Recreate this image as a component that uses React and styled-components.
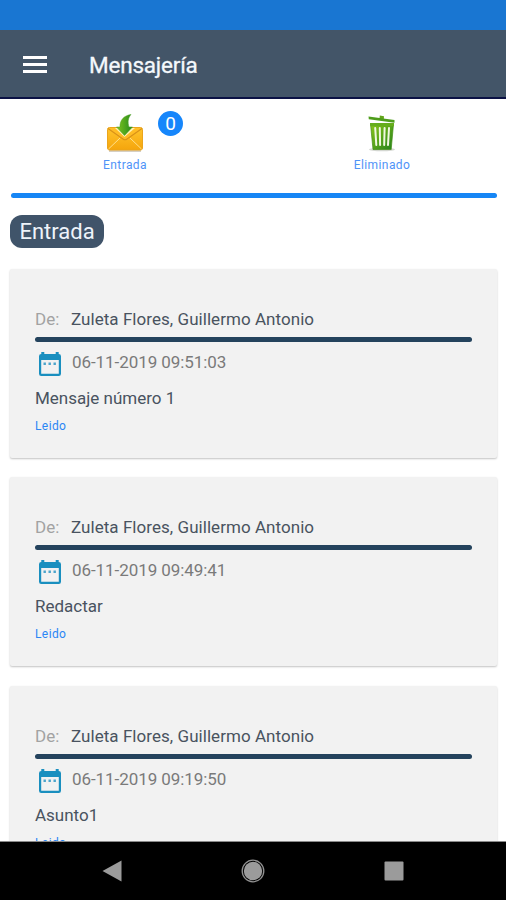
import styled, { createGlobalStyle } from "styled-components";

const GlobalStyle = createGlobalStyle`
  * {
    box-sizing: border-box;
  }
  body {
    margin: 0;
    background: #ffffff;
    font-family: Roboto, "Liberation Sans", sans-serif;
  }
`;

const Screen = styled.div`
  display: flex;
  flex-direction: column;
  height: 900px;
  overflow: hidden;
`;

const StatusBar = styled.div`
  flex: none;
  height: 30px;
  background: #1976d2;
`;

const Header = styled.header`
  flex: none;
  display: flex;
  align-items: center;
  height: 69px;
  padding: 2px 0 0 23px;
  background: #435568;
  border-bottom: 2px solid #0b1245;
`;

const MenuButton = styled.div`
  display: flex;
  flex-direction: column;
  gap: 4px;
  width: 24px;
  margin-right: 42px;
`;

const MenuLine = styled.span`
  height: 3px;
  background: #ffffff;
`;

const Title = styled.h1`
  margin: 0;
  color: #f4f8fc;
  font-size: 22.5px;
  font-weight: 400;
  line-height: 30px;
  letter-spacing: -0.2px;
  -webkit-text-stroke: 0.3px #f4f8fc;
`;

const Content = styled.main`
  flex: 1;
  min-height: 0;
  overflow: hidden;
  padding: 0 9px 0 10px;
`;

const Tabs = styled.nav`
  display: flex;
  height: 94px;
  padding: 14px 0 0 1px;
`;

const Tab = styled.div`
  position: relative;
  display: flex;
  flex-direction: column;
  align-items: center;
  flex: ${(props) => props.$flex};
  padding-left: ${(props) => props.$inset || "0"};
`;

const TabLabel = styled.span`
  margin-top: 4px;
  color: #4f93f8;
  font-size: 12px;
  line-height: 16px;
  letter-spacing: 0.4px;
`;

const Badge = styled.span`
  position: absolute;
  top: -2px;
  left: 147px;
  width: 25px;
  height: 25px;
  border-radius: 50%;
  background: #1686fb;
  color: #ffffff;
  font-size: 19px;
  line-height: 26px;
  text-align: center;
`;

const Divider = styled.div`
  height: ${(props) => props.$height};
  margin: ${(props) => props.$margin || "0"};
  border-radius: 3px;
  background: ${(props) => props.$color};
`;

const SectionPill = styled.h2`
  width: 94px;
  height: 33px;
  margin: 17px 0 20.6px;
  border-radius: 12px;
  background: #40546a;
  color: #eef3fa;
  font-size: 22px;
  font-weight: 400;
  line-height: 33px;
  text-align: center;
`;

const Card = styled.article`
  height: 189px;
  margin-bottom: 19.8px;
  padding: 38px 25px 0;
  border-radius: 2px;
  background: #f2f2f2;
  box-shadow: 0 1px 2px rgba(0, 0, 0, 0.24);
`;

const Row = styled.div`
  display: flex;
  height: ${(props) => props.$height};
`;

const Text = styled.span`
  color: ${(props) => props.$color};
  font-size: 17px;
  line-height: 24px;
`;

const FromLabel = styled(Text)`
  width: 36px;
`;

const Sender = styled(Text)`
  letter-spacing: 0.05px;
`;

const CalendarBox = styled.div`
  width: 37px;
  padding: 9px 0 0 1px;
`;

const DateText = styled(Text)`
  margin-top: 8px;
  letter-spacing: -0.07px;
`;

const Status = styled.div`
  color: #2b86f5;
  font-size: 12px;
  line-height: 16px;
  letter-spacing: 0.4px;
`;

const NavBar = styled.footer`
  flex: none;
  display: flex;
  justify-content: space-between;
  align-items: center;
  height: 59px;
  padding: 0 102px;
  border-top: 1px solid #8a8a8a;
  background: #000000;
`;

const InboxIcon = () => (
  <svg width="38" height="40" viewBox="0 0 38 40">
    <defs>
      <linearGradient id="envelope" x1="0" y1="0" x2="0" y2="1">
        <stop offset="0" stopColor="#ffc52d" />
        <stop offset="1" stopColor="#f5a50c" />
      </linearGradient>
      <linearGradient id="arrow" x1="0" y1="0" x2="1" y2="0">
        <stop offset="0" stopColor="#7fc51e" />
        <stop offset="1" stopColor="#258a1c" />
      </linearGradient>
    </defs>
    <path d="M3 38h32" stroke="#d5cfc4" strokeWidth="2" />
    <rect x="1.5" y="14.5" width="35" height="22.5" rx="2" fill="url(#envelope)" stroke="#eba51c" />
    <path d="M2.5 36L14 25M35.5 36L24 25" stroke="#ffe08b" strokeWidth="1" />
    <path d="M2 15.5L17 26Q19 27.5 21 26L36 15.5" fill="#ffbc24" stroke="#d99118" strokeWidth="1.1" />
    <path d="M9 15L18.5 24L29 15" fill="#fff0b3" />
    <path
      d="M25 1.5C18 2.5 13.7 7 14 14H10.5L18.5 22.5L26.5 14H23C21.5 9 22 5 25 1.5Z"
      fill="url(#arrow)"
      stroke="#4b9c20"
      strokeWidth="0.5"
    />
  </svg>
);

const TrashIcon = () => (
  <svg width="30" height="40" viewBox="0 0 30 40">
    <defs>
      <linearGradient id="bin" x1="0" y1="0" x2="1" y2="1">
        <stop offset="0" stopColor="#8bc619" />
        <stop offset="1" stopColor="#24821b" />
      </linearGradient>
    </defs>
    <ellipse cx="15" cy="36.5" rx="13" ry="1.8" fill="#d4d7d1" />
    <path d="M3.5 11H26.5L24.2 36.5H6Z" fill="url(#bin)" stroke="#438e16" strokeWidth="0.7" />
    <path
      d="M8.2 15L9.3 32M12.8 15L13.1 32M17.6 15L17.2 32M22 15L21 32"
      stroke="#f0f8df"
      strokeWidth="2"
      strokeLinecap="round"
    />
    <path d="M3 10H27V13.2H3.3Z" fill="#65ad1b" />
    <path d="M12.5 6L12.8 2.5L17 3.2L16.8 7" fill="#63a51b" />
    <path d="M1.5 3.4L27.5 7V9.8L1.8 6.2Z" fill="#4e9d1b" />
  </svg>
);

const CalendarIcon = () => (
  <svg width="28" height="28" viewBox="0 0 28 28">
    <path
      d="M5.3 1H8.3V3H19.7V1H22.7V3Q25 3 25 5.3V22.8Q25 25 22.8 25H5.2Q3 25 3 22.8V5.3Q3 3 5.3 3ZM5.2 9V22.8H22.8V9Z"
      fill="#1a8fbf"
      fillRule="evenodd"
    />
    <path d="M7.5 11.5h2.4v2.4H7.5zM12.5 11.5h2.4v2.4h-2.4zM17.5 11.5h2.4v2.4h-2.4z" fill="#4ba4cb" />
  </svg>
);

const messages = [
  { date: "06-11-2019 09:51:03", subject: "Mensaje número 1" },
  { date: "06-11-2019 09:49:41", subject: "Redactar" },
  { date: "06-11-2019 09:19:50", subject: "Asunto1" },
];

const Message = ({ date, subject }) => (
  <Card>
    <Row $height="30px">
      <FromLabel $color="#a2a2a2">De:</FromLabel>
      <Sender $color="#495360">Zuleta Flores, Guillermo Antonio</Sender>
    </Row>
    <Divider $height="5px" $color="#24435d" />
    <Row $height="44px">
      <CalendarBox>
        <CalendarIcon />
      </CalendarBox>
      <DateText $color="#7a7a7a">{date}</DateText>
    </Row>
    <Row $height="32px">
      <Text $color="#495360">{subject}</Text>
    </Row>
    <Status>Leido</Status>
  </Card>
);

const App = () => {
  return (
    <Screen>
      <GlobalStyle />
      <StatusBar />
      <Header>
        <MenuButton>
          <MenuLine />
          <MenuLine />
          <MenuLine />
        </MenuButton>
        <Title>Mensajería</Title>
      </Header>
      <Content>
        <Tabs>
          <Tab $flex="0 0 228px">
            <InboxIcon />
            <TabLabel>Entrada</TabLabel>
            <Badge>0</Badge>
          </Tab>
          <Tab $flex="1" $inset="28px">
            <TrashIcon />
            <TabLabel>Eliminado</TabLabel>
          </Tab>
        </Tabs>
        <Divider $height="5px" $color="#1686f5" $margin="0 0 0 1px" />
        <SectionPill>Entrada</SectionPill>
        {messages.map((message) => (
          <Message key={message.date} {...message} />
        ))}
      </Content>
      <NavBar>
        <svg width="20" height="22" viewBox="0 0 20 22">
          <path d="M0.5 11L19.5 0.5V21.5Z" fill="#9b9b9b" />
        </svg>
        <svg width="24" height="24" viewBox="0 0 24 24">
          <circle cx="12" cy="12" r="10.8" fill="none" stroke="#929292" strokeWidth="1.3" />
          <circle cx="12" cy="12" r="9.2" fill="#9b9b9b" />
        </svg>
        <svg width="20" height="20" viewBox="0 0 20 20">
          <rect x="0.5" y="0.5" width="19" height="19" rx="1" fill="#9b9b9b" />
        </svg>
      </NavBar>
    </Screen>
  );
};

export default App;
